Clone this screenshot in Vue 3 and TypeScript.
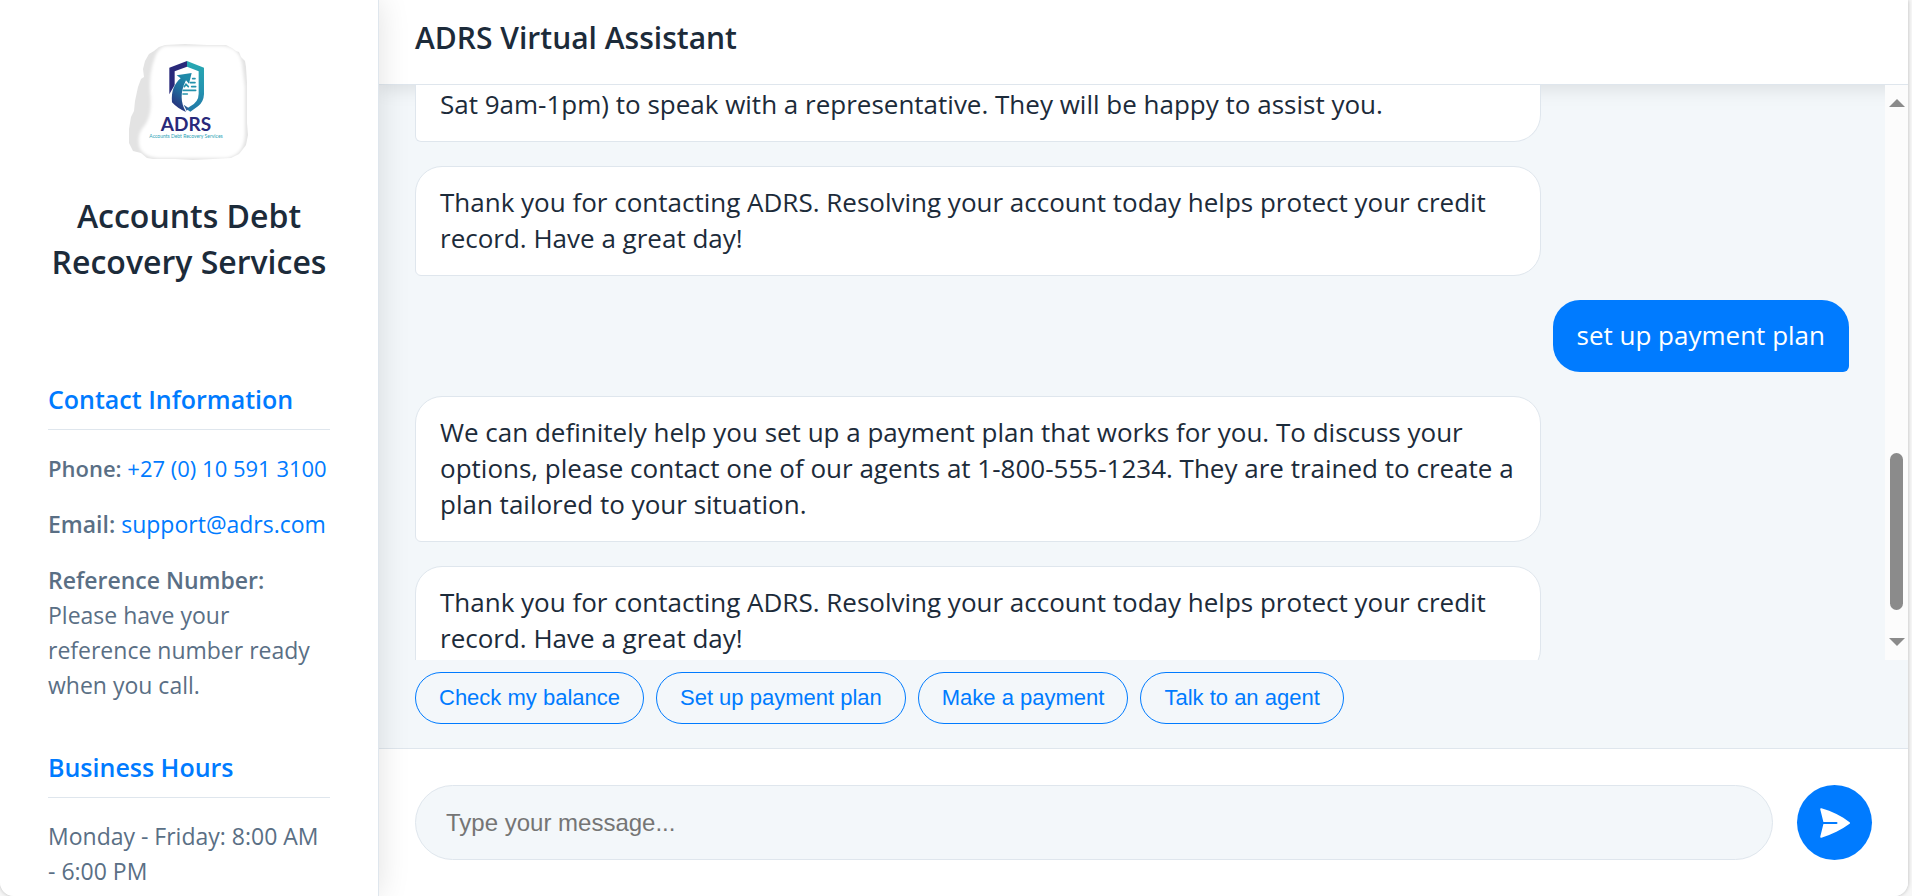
<script setup lang="ts">
import { ref } from 'vue'

interface Message {
  id: number
  from: 'bot' | 'user'
  text: string
  continued?: boolean
}

const messages = ref<Message[]>([
  { id: 1, from: 'bot', continued: true, text: 'Sat 9am-1pm) to speak with a representative. They will be happy to assist you.' },
  { id: 2, from: 'bot', text: 'Thank you for contacting ADRS. Resolving your account today helps protect your credit record. Have a great day!' },
  { id: 3, from: 'user', text: 'set up payment plan' },
  { id: 4, from: 'bot', text: 'We can definitely help you set up a payment plan that works for you. To discuss your options, please contact one of our agents at 1-800-555-1234. They are trained to create a plan tailored to your situation.' },
  { id: 5, from: 'bot', text: 'Thank you for contacting ADRS. Resolving your account today helps protect your credit record. Have a great day!' },
])

const quickReplies: string[] = ['Check my balance', 'Set up payment plan', 'Make a payment', 'Talk to an agent']
const draft = ref('')

function send(text: string): void {
  const trimmed = text.trim()
  if (!trimmed) return
  messages.value.push({ id: messages.value.length + 1, from: 'user', text: trimmed })
  draft.value = ''
}
</script>

<template>
  <div class="app">
    <aside class="sidebar">
      <svg class="logo" viewBox="0 0 160 140" role="img" aria-label="ADRS logo">
        <defs>
          <linearGradient id="arrow" x1="0" y1="1" x2="0.4" y2="0">
            <stop offset="0.1" stop-color="#2a2a78" />
            <stop offset="0.6" stop-color="#1f6a9c" />
            <stop offset="1" stop-color="#1e8aa8" />
          </linearGradient>
          <linearGradient id="shield" x1="0" y1="0" x2="0" y2="1">
            <stop offset="0" stop-color="#27a9b2" />
            <stop offset="0.6" stop-color="#2492b0" />
            <stop offset="1" stop-color="#2277a6" />
          </linearGradient>
          <filter id="soft" x="-10%" y="-10%" width="120%" height="120%">
            <feGaussianBlur stdDeviation="1.4" />
          </filter>
        </defs>
        <path
          fill="#e3e3e3"
          d="M50 16 L56 14 L76 13 L98 14 L117 14 L123 17 L127 20 L130 21 L132 26 L136 30 L137 36 L138 52 L138 92 L139 104 L137 114 L134 118 L130 123 L122 127 L104 128 L84 129 L66 128 L44 128 L38 127 L32 122 L24 120 L20 112 L20 98 L22 86 L25 80 L26 70 L29 56 L32 48 L35 46 L34 38 L36 30 L40 23 L45 20 Z"
        />
        <path
          fill="#fff"
          filter="url(#soft)"
          d="M56 15 H115 Q130 17 133 32 L136 56 V104 Q135 124 118 127 H48 Q32 125 30 114 Q28 102 36 94 Q44 82 41 60 Q40 42 46 26 Q49 17 56 15 Z"
        />
        <g transform="scale(0.3333)">
          <path fill="#29297a" d="M234 90 L181 110 V190 L197 162 V121 L234 107 Z" />
          <path fill="url(#shield)" d="M234 90 L285 110 V190 Q284 213 267 226 L244 242 L232 234 L244 226 Q269 212 269 188 V121 L234 107 Z" />
          <path fill="url(#arrow)" d="M248 126 L203 133 L215 142 C196 158 186 180 189 214 Q205 232 231 243 Q205 200 231 148 L240 158 Z" />
          <path fill="#2a5f98" d="M224 221 L240 232 L233 239 Z" />
          <g stroke="#2592ac" stroke-width="5" stroke-linecap="round" fill="none">
            <path d="M251 143 H258 M244 155 H258 M248 167 H260 M223 178 H260 M222 189 H235" />
            <path d="M226 167 L231 160 L238 167" />
          </g>
        </g>
        <text class="logo-name" x="77" y="100" text-anchor="middle">ADRS</text>
        <text class="logo-tag" x="77" y="107" text-anchor="middle">Accounts Debt Recovery Services</text>
      </svg>
      <h1 class="brand">Accounts Debt Recovery Services</h1>

      <section class="info">
        <h2>Contact Information</h2>
        <p class="phone"><strong>Phone:</strong> <a href="tel:+27105913100">+27 (0) 10 591 3100</a></p>
        <p><strong>Email:</strong> <a href="mailto:support@adrs.com">support@adrs.com</a></p>
        <p class="wrap"><strong>Reference Number:</strong><br />Please have your reference number ready when you call.</p>
      </section>

      <section class="info">
        <h2>Business Hours</h2>
        <p class="wrap">Monday - Friday: 8:00 AM - 6:00 PM</p>
      </section>
    </aside>

    <main class="chat">
      <header class="chat-header">
        <h2>ADRS Virtual Assistant</h2>
      </header>

      <div class="viewport">
        <div class="messages" aria-live="polite">
          <p
            v-for="m in messages"
            :key="m.id"
            class="bubble"
            :class="[m.from, { continued: m.continued }]"
          >{{ m.text }}</p>
        </div>
        <div class="scrollbar" aria-hidden="true">
          <span class="arrow up"></span>
          <span class="track-before"></span>
          <span class="thumb"></span>
          <span class="track-after"></span>
          <span class="arrow down"></span>
        </div>
      </div>

      <div class="quick">
        <button v-for="q in quickReplies" :key="q" type="button" @click="send(q)">{{ q }}</button>
      </div>

      <form class="composer" @submit.prevent="send(draft)">
        <input v-model="draft" type="text" placeholder="Type your message..." aria-label="Type your message" />
        <button type="submit" aria-label="Send">
          <svg viewBox="0 0 30 30" aria-hidden="true">
            <path fill="#fff" d="M1.4 0.3 C12 3.2 21.5 8.2 29.6 14.2 Q30.5 15 29.6 15.8 C21.5 21.8 12 26.8 1.4 29.7 Q0 30 0.3 28.6 L3.4 16 H16.5 Q17.5 16 17.5 15 Q17.5 14 16.5 14 H3.4 L0.3 1.4 Q0 0 1.4 0.3 Z" />
          </svg>
        </button>
      </form>
    </main>
  </div>
</template>

<style>
body {
  margin: 0;
  background: #f7f7f7;
}
</style>

<style scoped>
.app {
  display: flex;
  height: 100vh;
  margin-right: 4px;
  overflow: hidden;
  border-radius: 0 0 14px 14px;
  background: #fff;
  box-shadow: 0 0 4px rgba(0, 0, 0, 0.25);
  color: #1c2b3a;
  font-family: 'Open Sans', 'Noto Sans', sans-serif;
}

h1,
h2,
p {
  margin: 0;
}

.sidebar {
  position: relative;
  z-index: 1;
  box-sizing: border-box;
  flex: none;
  width: 379px;
  padding: 31px 48px 0;
  border-right: 1px solid #dfe6ed;
  background: #fff;
  box-shadow: 0 0 30px rgba(0, 0, 0, 0.12);
}

.logo {
  display: block;
  width: 160px;
  height: 140px;
  margin: 0 auto 22px;
}

.logo-name {
  fill: #29297a;
  font: 700 19px Lato, sans-serif;
}

.logo-tag {
  fill: #2a9fb4;
  font: 400 5px Lato, sans-serif;
}

.brand {
  margin-bottom: 97px;
  font-size: 32px;
  font-weight: 600;
  line-height: 46px;
  text-align: center;
}

.info {
  display: flex;
  flex-direction: column;
  gap: 21px;
  margin-bottom: 47px;
  color: #5a6f85;
  font-size: 23px;
  line-height: 35px;
}

.info h2 {
  padding-bottom: 13px;
  border-bottom: 1px solid #dfe6ed;
  color: #007bff;
  font-size: 25px;
  font-weight: 600;
  line-height: 34px;
}

.info p {
  white-space: nowrap;
}

.info .wrap {
  white-space: normal;
}

.info .phone {
  font-size: 22px;
}

.info strong {
  font-weight: 600;
}

.info a {
  color: #007bff;
  text-decoration: none;
}

.chat {
  display: flex;
  flex: 1;
  flex-direction: column;
  min-width: 0;
  background: #f3f7fa;
}

.chat-header {
  padding: 20px 36px 28px;
  border-bottom: 1px solid #dfe6ed;
  background: #fff;
  box-shadow: 0 4px 18px rgba(0, 0, 0, 0.1);
}

.chat-header h2 {
  font-size: 30px;
  font-weight: 600;
  line-height: 36px;
}

.viewport {
  display: flex;
  flex: 1;
  min-height: 0;
}

.messages {
  display: flex;
  flex: 1;
  flex-direction: column;
  gap: 24px;
  min-width: 0;
  padding: 0 36px;
  overflow: hidden;
}

.bubble {
  box-sizing: border-box;
  flex: none;
  max-width: 78.5%;
  padding: 17px 24px 19px;
  border-radius: 27px;
  font-size: 26px;
  line-height: 36px;
}

.bubble.bot {
  align-self: flex-start;
  width: 78.5%;
  border: 1px solid #dfe6ed;
  border-bottom-left-radius: 6px;
  background: #fff;
}

.bubble.user {
  align-self: flex-end;
  border-bottom-right-radius: 6px;
  background: #007bff;
  color: #fff;
}

.bubble.continued {
  padding-top: 1px;
  border-top: 0;
  border-top-left-radius: 0;
  border-top-right-radius: 0;
}

.scrollbar {
  display: flex;
  flex: none;
  flex-direction: column;
  align-items: center;
  box-sizing: border-box;
  width: 23px;
  padding: 14px 0;
  background: #fcfcfc;
}

.arrow {
  border: 0 solid transparent;
  border-right-width: 8px;
  border-left-width: 8px;
}

.arrow.up {
  border-bottom: 8px solid #8b8b8b;
}

.arrow.down {
  border-top: 8px solid #8b8b8b;
}

.track-before {
  flex: 346;
}

.thumb {
  flex: 157;
  width: 13px;
  border-radius: 7px;
  background: #8b8b8b;
}

.track-after {
  flex: 28;
}

.quick {
  display: flex;
  flex-wrap: wrap;
  gap: 12px;
  padding: 12px 36px 24px;
}

.quick button {
  height: 52px;
  padding: 0 23px;
  border: 1px solid #007bff;
  border-radius: 27px;
  background: transparent;
  color: #007bff;
  font: 22px 'Liberation Sans', Arial, sans-serif;
}

.composer {
  display: flex;
  gap: 24px;
  padding: 36px;
  border-top: 1px solid #dfe6ed;
  background: #fff;
}

.composer input {
  box-sizing: border-box;
  flex: 1;
  min-width: 0;
  height: 75px;
  padding: 0 30px;
  border: 1px solid #dfe6ed;
  border-radius: 38px;
  background: #f3f7fa;
  color: #1c2b3a;
  font: 24px 'Liberation Sans', Arial, sans-serif;
}

.composer input::placeholder {
  color: #757575;
}

.composer button {
  display: flex;
  flex: none;
  align-items: center;
  justify-content: center;
  width: 75px;
  height: 75px;
  padding: 0;
  border: 0;
  border-radius: 50%;
  background: #007bff;
}

.composer svg {
  width: 30px;
  height: 30px;
}
</style>
